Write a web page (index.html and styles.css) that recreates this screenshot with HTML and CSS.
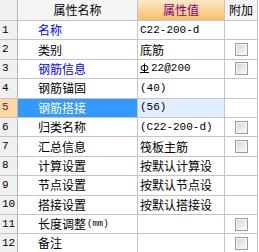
FILE: index.html
```html
<!DOCTYPE html>
<html>
<head>
<meta charset="utf-8">
<link rel="stylesheet" href="styles.css">
</head>
<body>
<div class="grid">
  <div class="c hd num"></div>
  <div class="c hd center">属性名称</div>
  <div class="c hd val-hd center">属性值</div>
  <div class="c hd center last">附加</div>

  <div class="c num"><span class="en">1</span></div>
  <div class="c name blue">名称</div>
  <div class="c val"><span class="en">C22-200-d</span></div>
  <div class="c last"></div>

  <div class="c num"><span class="en">2</span></div>
  <div class="c name">类别</div>
  <div class="c val">底筋</div>
  <div class="c last center"><span class="cb"></span></div>

  <div class="c num"><span class="en">3</span></div>
  <div class="c name blue">钢筋信息</div>
  <div class="c val"><svg class="rebar" width="9" height="11" viewBox="0 0 9 11"><ellipse cx="4.5" cy="5" rx="3.5" ry="2.6" fill="none" stroke="#000" stroke-width="1"/><line x1="4.5" y1="0.5" x2="4.5" y2="9.5" stroke="#000" stroke-width="1"/><line x1="0" y1="9.5" x2="9" y2="9.5" stroke="#000" stroke-width="1"/></svg><span class="en">22@200</span></div>
  <div class="c last center"><span class="cb"></span></div>

  <div class="c num"><span class="en">4</span></div>
  <div class="c name">钢筋锚固</div>
  <div class="c val"><span class="en">(40)</span></div>
  <div class="c last"></div>

  <div class="c num sel-num"><span class="en">5</span></div>
  <div class="c name sel-name">钢筋搭接</div>
  <div class="c val sel-val"><span class="en">(56)</span></div>
  <div class="c last"></div>

  <div class="c num"><span class="en">6</span></div>
  <div class="c name">归类名称</div>
  <div class="c val"><span class="en">(C22-200-d)</span></div>
  <div class="c last center"><span class="cb"></span></div>

  <div class="c num"><span class="en">7</span></div>
  <div class="c name">汇总信息</div>
  <div class="c val">筏板主筋</div>
  <div class="c last center"><span class="cb"></span></div>

  <div class="c num"><span class="en">8</span></div>
  <div class="c name">计算设置</div>
  <div class="c val clip">按默认计算设</div>
  <div class="c last"></div>

  <div class="c num"><span class="en">9</span></div>
  <div class="c name">节点设置</div>
  <div class="c val clip">按默认节点设</div>
  <div class="c last"></div>

  <div class="c num"><span class="en">10</span></div>
  <div class="c name">搭接设置</div>
  <div class="c val clip">按默认搭接设</div>
  <div class="c last"></div>

  <div class="c num"><span class="en">11</span></div>
  <div class="c name">长度调整<span class="small">(mm)</span></div>
  <div class="c val"></div>
  <div class="c last center"><span class="cb"></span></div>

  <div class="c num"><span class="en">12</span></div>
  <div class="c name">备注</div>
  <div class="c val"></div>
  <div class="c last center"><span class="cb"></span></div>
</div>
</body>
</html>
```

FILE: styles.css
```css
html, body {
  margin: 0;
  padding: 0;
  background: #ffffff;
}

.grid {
  display: grid;
  grid-template-columns: 18px 120px 87px 33px;
  grid-template-rows: 21px repeat(12, 19.4px);
  font-family: "Noto Sans CJK SC", sans-serif;
  font-size: 12px;
  color: #000;
}

.c {
  box-sizing: border-box;
  border-right: 1px solid #c4c4c4;
  border-bottom: 1px solid #c4c4c4;
  display: flex;
  align-items: center;
  white-space: nowrap;
  overflow: hidden;
  line-height: 1;
}

.center {
  justify-content: center;
}

.hd {
  background: #f4f4f4;
}

.val-hd {
  background: linear-gradient(#fce9c8, #f4c06a);
  color: #800080;
}

.num {
  background: #f0f0f0;
  padding-left: 2px;
  border-right-color: #b8b8b8;
}

.name {
  padding-left: 20px;
}

.val {
  padding-left: 2px;
}

.blue {
  color: #0000ff;
}

.en {
  font-family: "Liberation Mono", monospace;
  font-size: 11px;
}

.small {
  font-family: "Liberation Mono", monospace;
  font-size: 9px;
  margin-left: 1px;
}

.rebar {
  margin-right: 2px;
  flex: none;
}

.sel-num {
  background: #ffd89c;
  color: #800080;
}

.sel-name {
  background: #3399ff;
  color: #ffffff;
}

.sel-val {
  background: #e1eeff;
}

.cb {
  box-sizing: border-box;
  width: 13px;
  height: 13px;
  border: 1px solid #9c9c9c;
  background: linear-gradient(135deg, #d4d4d4, #fbfbfb);
  box-shadow: inset 0 0 0 1px #f6f6f6;
}
```
